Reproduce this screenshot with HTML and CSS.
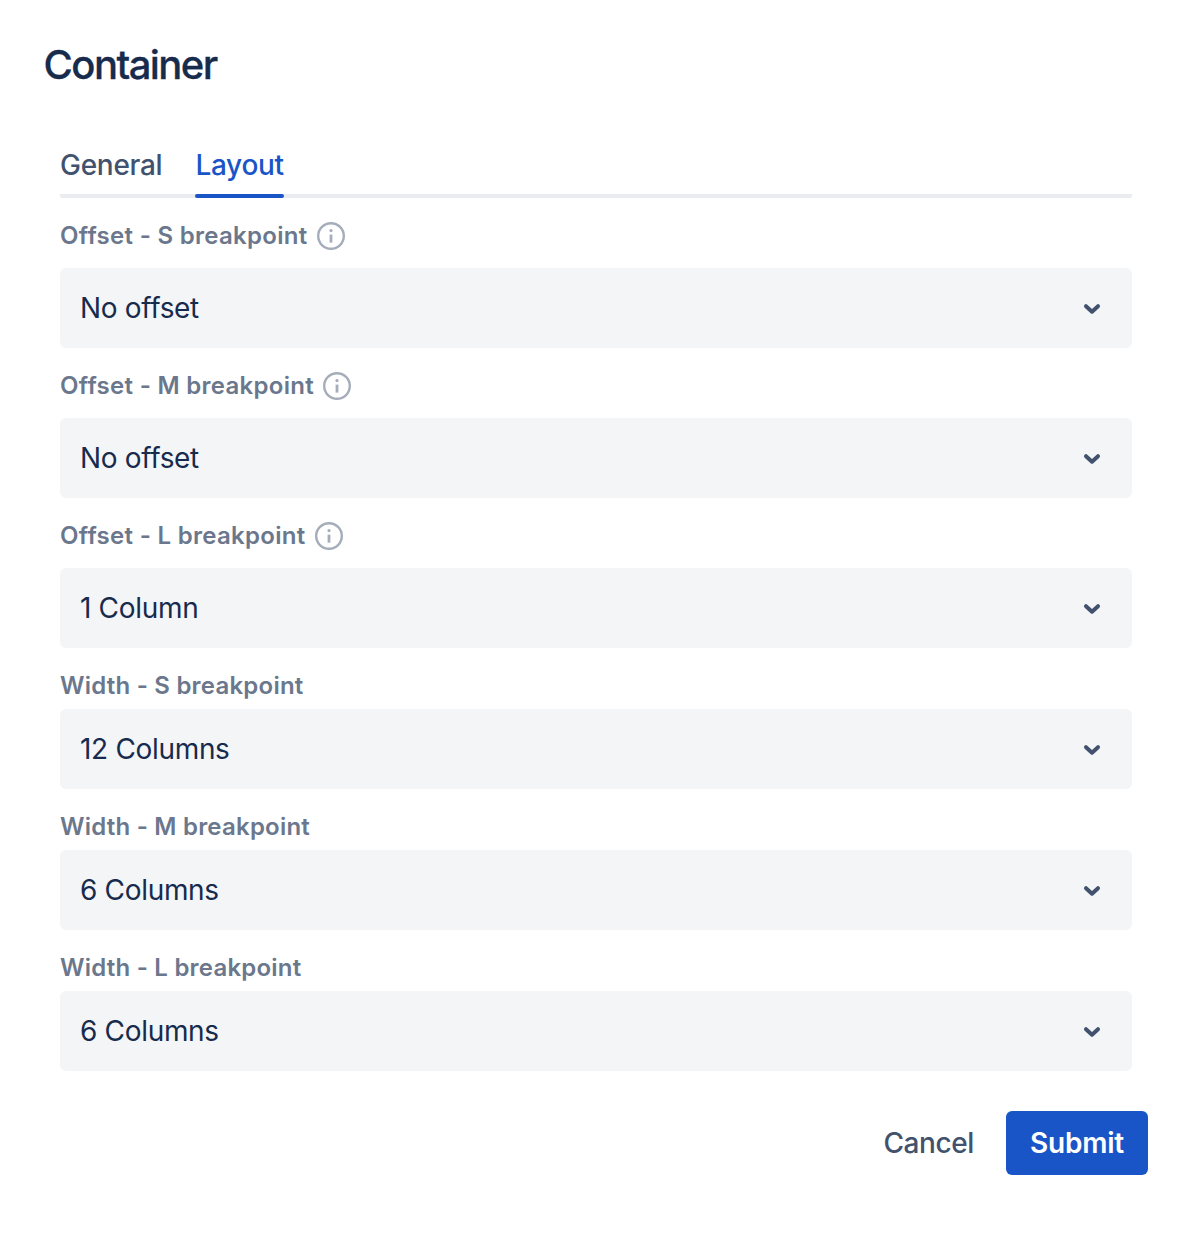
FILE: index.html
```html
<!DOCTYPE html>
<html lang="en">
<head>
<meta charset="utf-8">
<title>Container</title>
<link rel="stylesheet" href="styles.css">
</head>
<body>
<svg width="0" height="0" class="defs">
  <symbol id="info" viewBox="0 0 28 28"><circle cx="14" cy="14" r="12.8" fill="none" stroke="currentColor" stroke-width="2.4"/><circle cx="14" cy="8.6" r="1.6" fill="currentColor"/><path d="M14 12.6v8" stroke="currentColor" stroke-width="2.8"/></symbol>
  <symbol id="chevron" viewBox="0 0 18 12"><path d="M3 3.2l6 5.5 6-5.5" fill="none" stroke="currentColor" stroke-width="4" stroke-linecap="round" stroke-linejoin="round"/></symbol>
</svg>
<main class="dialog">
  <h1 class="title">Container</h1>
  <nav class="tabs"><a class="tab">General</a><a class="tab active">Layout</a></nav>
  <form class="fields">
    <div class="field hinted"><label class="label"><span>Offset - S breakpoint</span><svg class="info"><use href="#info"/></svg></label><div class="select"><span>No offset</span><svg class="chevron"><use href="#chevron"/></svg></div></div>
    <div class="field hinted"><label class="label"><span>Offset - M breakpoint</span><svg class="info"><use href="#info"/></svg></label><div class="select"><span>No offset</span><svg class="chevron"><use href="#chevron"/></svg></div></div>
    <div class="field hinted"><label class="label"><span>Offset - L breakpoint</span><svg class="info"><use href="#info"/></svg></label><div class="select"><span>1 Column</span><svg class="chevron"><use href="#chevron"/></svg></div></div>
    <div class="field"><label class="label"><span>Width - S breakpoint</span></label><div class="select"><span>12 Columns</span><svg class="chevron"><use href="#chevron"/></svg></div></div>
    <div class="field"><label class="label"><span>Width - M breakpoint</span></label><div class="select"><span>6 Columns</span><svg class="chevron"><use href="#chevron"/></svg></div></div>
    <div class="field"><label class="label"><span>Width - L breakpoint</span></label><div class="select"><span>6 Columns</span><svg class="chevron"><use href="#chevron"/></svg></div></div>
  </form>
  <footer class="actions"><button class="btn">Cancel</button><button class="btn primary">Submit</button></footer>
</main>
</body>
</html>
```
FILE: styles.css
```css
* { box-sizing: border-box; }
body { margin: 0; background: #fff; font-family: Inter, sans-serif; font-feature-settings: "calt" 0; color: #172b4d; }
.defs { display: none; }
.dialog { width: 1190px; height: 1236px; padding: 41px 42px 0 43.5px; }
.title { margin: 0; font-size: 40px; line-height: 48px; font-weight: 500; letter-spacing: -1.55px; -webkit-text-stroke: 0.3px; }
.tabs { display: flex; gap: 33px; height: 64px; margin: 45px 16px 0 16.5px; background: linear-gradient(#ebecf0, #ebecf0) 0 100% / 100% 4px no-repeat; border-radius: 2px; }
.tab { position: relative; height: 64px; padding-top: 11px; font-size: 28px; line-height: 40px; font-weight: 500; letter-spacing: -0.28px; color: #42526e; }
.active { color: #1a55c8; }
.active::after { content: ""; position: absolute; left: 0; right: 0; bottom: 0; height: 4px; border-radius: 2px; background: #1a55c8; }
.fields { margin: 0 16px 0 16.5px; }
.field { padding-top: 21px; }
.label { display: flex; align-items: center; gap: 9px; height: 40px; padding-bottom: 7px; font-size: 24px; line-height: 28px; font-weight: 600; letter-spacing: 0.22px; color: #6b778c; }
.hinted .label { height: 49px; padding-bottom: 15px; letter-spacing: 0.3px; }
.info { width: 28px; height: 28px; color: #a5adba; }
.select { display: flex; align-items: center; justify-content: space-between; height: 80px; padding: 0 31px 0 20px; border-radius: 6px; background: #f4f5f7; font-size: 28px; letter-spacing: -0.32px; }
.chevron { width: 18px; height: 12px; margin-top: 2px; color: #42526e; }
.actions { display: flex; justify-content: flex-end; gap: 8px; margin-top: 40px; }
.btn { height: 64px; padding: 0 24px; border: 0; border-radius: 6px; background: none; font: 500 28px Inter, sans-serif; letter-spacing: -0.4px; color: #42526e; }
.primary { width: 142px; background: #1a55c8; color: #fff; font-weight: 600; letter-spacing: -0.25px; }
```
